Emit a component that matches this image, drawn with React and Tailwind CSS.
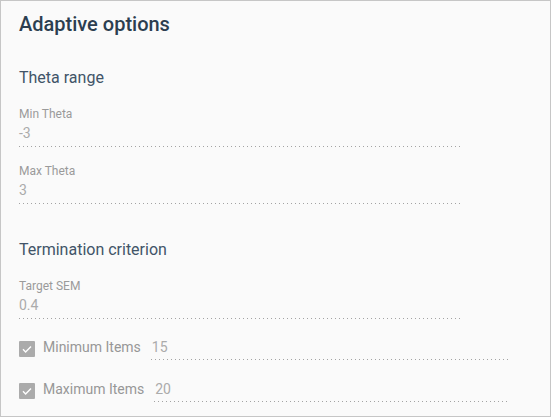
const dots = 'h-px bg-[repeating-linear-gradient(to_right,#a3a3a3_0_1px,transparent_1px_4px)]';

function Field({ label, value, mt }) {
  return (
    <div className={mt}>
      <div className="text-[12px] leading-[16px] text-[#9a9a9a]">{label}</div>
      <div className="mt-[2px] text-[14px] leading-[18px] text-[#ababab]">{value}</div>
      <div className={`mt-[4px] w-[442px] ${dots}`} />
    </div>
  );
}

function CheckRow({ label, value, mt, lineW }) {
  return (
    <div className={`flex items-start ${mt}`}>
      <div className="mt-[3px] flex h-[16px] w-[16px] items-center justify-center rounded-[1px] bg-[#ababab]">
        <svg width="12" height="12" viewBox="0 0 12 12" fill="none">
          <path d="M2 6.3l2.6 2.6L10 3.4" stroke="#fff" strokeWidth="1.4" />
        </svg>
      </div>
      <div className="ml-[8px] text-[14px] leading-[18px] text-[#979797]">{label}</div>
      <div className="ml-[10px] flex flex-col">
        <div className="pl-[1px] text-[14px] leading-[18px] text-[#ababab]">{value}</div>
        <div className={`mt-[3px] ${lineW} ${dots}`} />
      </div>
    </div>
  );
}

export default function App() {
  return (
    <div className="h-[417px] w-[551px] border border-[#c6c6c6] bg-[#fafafa] pl-[18px] font-['Roboto',sans-serif]">
      <h1 className="mt-[11px] text-[20px] font-medium leading-[24px] text-[#2c3e50]">Adaptive options</h1>
      <h2 className="mt-[32px] text-[16px] leading-[20px] text-[#415468]">Theta range</h2>
      <Field label="Min Theta" value="-3" mt="mt-[18px]" />
      <Field label="Max Theta" value="3" mt="mt-[16px]" />
      <h2 className="mt-[36px] text-[16px] leading-[20px] text-[#415468]">Termination criterion</h2>
      <Field label="Target SEM" value="0.4" mt="mt-[18px]" />
      <CheckRow label="Minimum Items" value="15" mt="mt-[19px]" lineW="w-[359px]" />
      <CheckRow label="Maximum Items" value="20" mt="mt-[20px]" lineW="w-[355px]" />
    </div>
  );
}
